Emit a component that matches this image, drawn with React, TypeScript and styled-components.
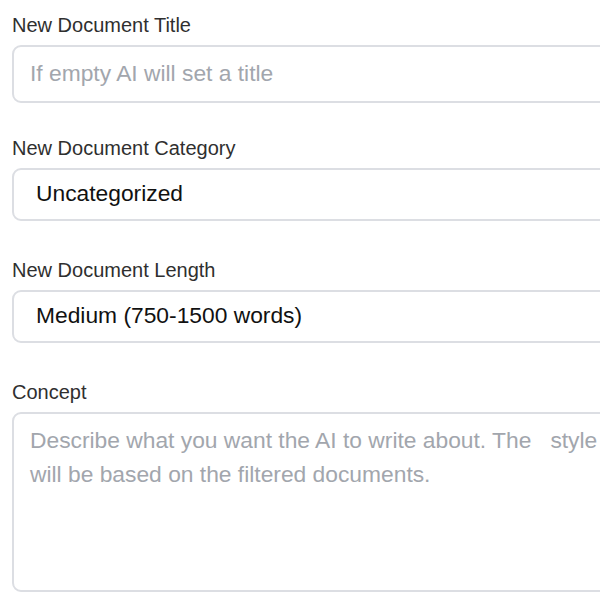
import React from "react";
import styled, { createGlobalStyle } from "styled-components";

const GlobalStyle = createGlobalStyle`
  html, body {
    margin: 0;
    padding: 0;
    background: #ffffff;
    overflow: hidden;
  }
  body {
    font-family: "Liberation Sans", Arial, sans-serif;
  }
`;

const Form = styled.form`
  width: 760px;
  padding: 12px 0 0 12px;
  display: flex;
  flex-direction: column;
`;

const Field = styled.div<{ $after: number }>`
  display: flex;
  flex-direction: column;
  gap: 7px;
  margin-bottom: ${(p) => p.$after}px;
`;

const Label = styled.label`
  font-size: 20px;
  line-height: 26px;
  color: #2f2f2f;
`;

const controlBase = `
  box-sizing: border-box;
  width: 100%;
  border: 2px solid #dcdee3;
  border-radius: 9px;
  background: #ffffff;
  font-family: "Liberation Sans", Arial, sans-serif;
  font-size: 22.8px;
  color: #111111;
  outline: none;
  margin: 0;
`;

const TextInput = styled.input`
  ${controlBase}
  height: 58px;
  padding: 0 16px 2px;
  &::placeholder {
    color: #a2a6ad;
  }
`;

const Select = styled.select`
  ${controlBase}
  height: 53px;
  padding: 0 22px 3px;
  appearance: none;
  -webkit-appearance: none;
`;

const TextArea = styled.textarea`
  ${controlBase}
  height: 180px;
  padding: 9px 16px;
  line-height: 34px;
  resize: none;
  &::placeholder {
    color: #a2a6ad;
  }
`;

export default function App() {
  return (
    <>
      <GlobalStyle />
      <Form>
        <Field $after={32}>
          <Label>New Document Title</Label>
          <TextInput placeholder="If empty AI will set a title" />
        </Field>
        <Field $after={36}>
          <Label>New Document Category</Label>
          <Select defaultValue="uncategorized">
            <option value="uncategorized">Uncategorized</option>
          </Select>
        </Field>
        <Field $after={36}>
          <Label>New Document Length</Label>
          <Select defaultValue="medium">
            <option value="medium">Medium (750-1500 words)</option>
          </Select>
        </Field>
        <Field $after={0}>
          <Label>Concept</Label>
          <TextArea
            placeholder={
              "Describe what you want the AI to write about. The   style\nwill be based on the filtered documents."
            }
          />
        </Field>
      </Form>
    </>
  );
}
